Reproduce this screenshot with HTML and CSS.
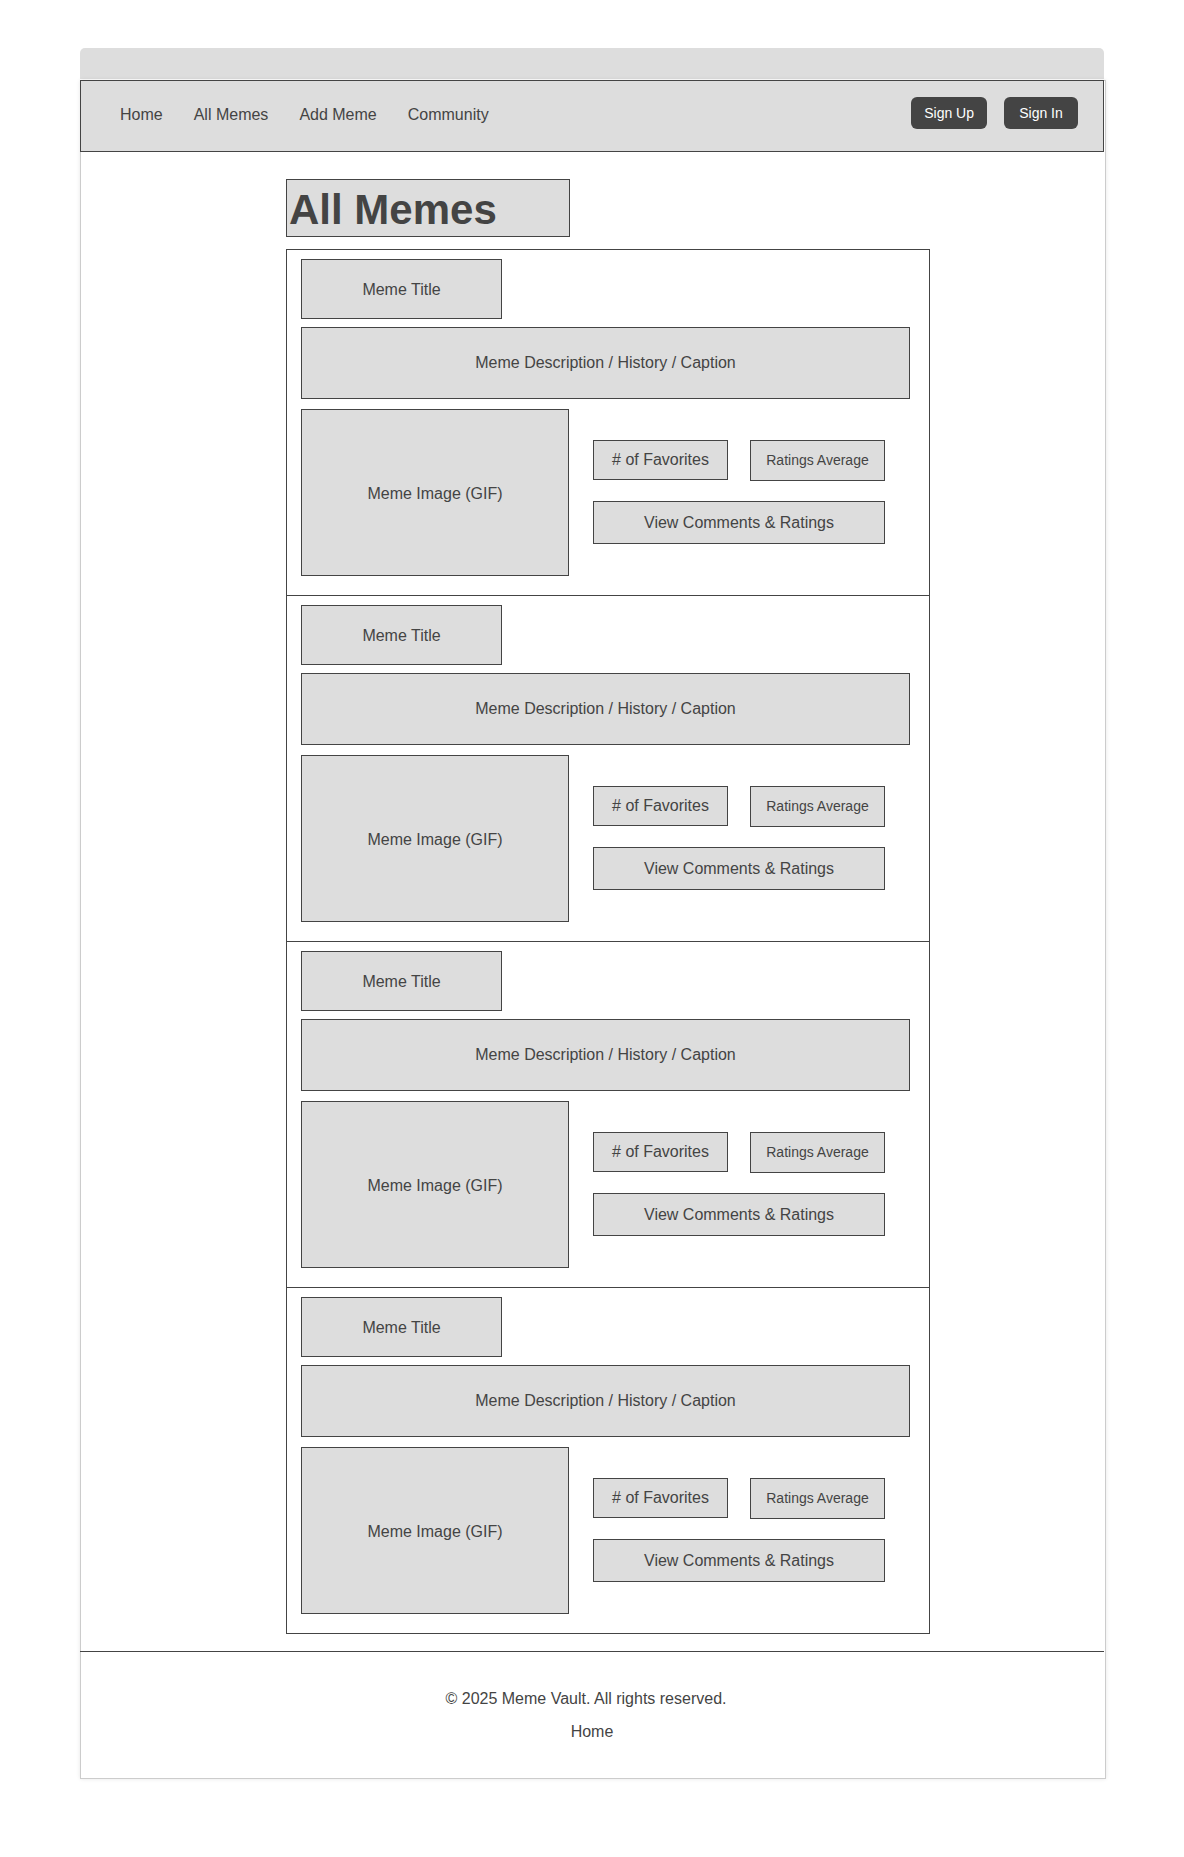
FILE: index.html
```html
<!DOCTYPE html>
<html lang="en">
<head>
<meta charset="utf-8">
<meta name="viewport" content="width=device-width, initial-scale=1">
<title>All Memes</title>
<link rel="stylesheet" href="styles.css">
</head>
<body>
<div class="titlebar"></div>
<div class="frame">
  <header class="header">
    <nav class="nav">
      <a href="#">Home</a>
      <a href="#">All Memes</a>
      <a href="#">Add Meme</a>
      <a href="#">Community</a>
    </nav>
    <div class="account">
      <button type="button" class="button">Sign Up</button>
      <button type="button" class="button">Sign In</button>
    </div>
  </header>
  <main class="main">
    <h1 class="heading">All Memes</h1>
    <div class="list">
      <article class="card">
        <h2 class="box card-title">Meme Title</h2>
        <p class="box card-text">Meme Description / History / Caption</p>
        <div class="card-body">
          <div class="box card-image">Meme Image (GIF)</div>
          <div class="stats">
            <div class="box stat"># of Favorites</div>
            <div class="box stat-small">Ratings Average</div>
            <a href="#" class="box view">View Comments &amp; Ratings</a>
          </div>
        </div>
      </article>
      <article class="card">
        <h2 class="box card-title">Meme Title</h2>
        <p class="box card-text">Meme Description / History / Caption</p>
        <div class="card-body">
          <div class="box card-image">Meme Image (GIF)</div>
          <div class="stats">
            <div class="box stat"># of Favorites</div>
            <div class="box stat-small">Ratings Average</div>
            <a href="#" class="box view">View Comments &amp; Ratings</a>
          </div>
        </div>
      </article>
      <article class="card">
        <h2 class="box card-title">Meme Title</h2>
        <p class="box card-text">Meme Description / History / Caption</p>
        <div class="card-body">
          <div class="box card-image">Meme Image (GIF)</div>
          <div class="stats">
            <div class="box stat"># of Favorites</div>
            <div class="box stat-small">Ratings Average</div>
            <a href="#" class="box view">View Comments &amp; Ratings</a>
          </div>
        </div>
      </article>
      <article class="card">
        <h2 class="box card-title">Meme Title</h2>
        <p class="box card-text">Meme Description / History / Caption</p>
        <div class="card-body">
          <div class="box card-image">Meme Image (GIF)</div>
          <div class="stats">
            <div class="box stat"># of Favorites</div>
            <div class="box stat-small">Ratings Average</div>
            <a href="#" class="box view">View Comments &amp; Ratings</a>
          </div>
        </div>
      </article>
    </div>
  </main>
  <footer class="footer">
    <p class="copyright">© 2025 Meme Vault. All rights reserved.</p>
    <a href="#">Home</a>
  </footer>
</div>
</body>
</html>
```
FILE: styles.css
```css
* {
  box-sizing: border-box;
}

body {
  margin: 0;
  padding: 48px 78px 78px 80px;
  background: #fff;
  color: #444;
  font: 16px/20px "Liberation Sans", Arial, sans-serif;
}

h1, h2, p {
  margin: 0;
}

a {
  color: inherit;
  text-decoration: none;
}

.titlebar {
  height: 31px;
  margin: 0 2px 1px 0;
  background: #ddd;
  border-radius: 5px 5px 0 0;
}

.frame {
  border: 1px solid #ccc;
  box-shadow: 0 0 4px rgba(0, 0, 0, 0.1);
}

.header {
  display: flex;
  justify-content: space-between;
  align-items: flex-start;
  min-height: 72px;
  margin: -1px 1px 0 -1px;
  padding: 16px 25px 16px 39px;
  background: #ddd;
  border: 1px solid #444;
}

.nav {
  display: flex;
  gap: 31px;
  padding-top: 8px;
}

.account {
  display: flex;
  gap: 17px;
}

.button {
  min-width: 74px;
  height: 32px;
  padding: 0 13px;
  border: 0;
  border-radius: 6px;
  background: #444;
  color: #fff;
  font: 14px/20px "Liberation Sans", Arial, sans-serif;
}

.main {
  display: grid;
  grid-template-columns: 41fr minmax(0, 644px) 35fr;
  row-gap: 12px;
  padding: 27px 0 17px;
}

.heading {
  grid-column: 2;
  justify-self: start;
  width: 284px;
  padding: 6px 2px 2px;
  background: #ddd;
  border: 1px solid #444;
  font-size: 42px;
  line-height: 48px;
}

.list {
  grid-column: 2;
  border: 1px solid #444;
  border-top: 0;
}

.card {
  display: flex;
  flex-direction: column;
  padding: 9px 19px 19px 14px;
  border-top: 1px solid #444;
}

.box {
  display: flex;
  align-items: center;
  justify-content: center;
  background: #ddd;
  border: 1px solid #444;
  font-size: 16px;
  font-weight: 400;
}

.card-title {
  width: 201px;
  min-height: 60px;
  margin-bottom: 8px;
  padding-top: 2px;
}

.card-text {
  min-height: 72px;
  margin-bottom: 10px;
}

.card-body {
  display: grid;
  grid-template-columns: 268px 1fr;
  column-gap: 24px;
  padding-right: 25px;
}

.card-image {
  min-height: 167px;
  padding-top: 2px;
}

.stats {
  display: grid;
  grid-template-columns: 1fr 1fr;
  grid-template-rows: 41px 43px;
  gap: 20px 22px;
  padding-top: 31px;
}

.stat {
  margin-bottom: 1px;
}

.stat-small {
  padding-bottom: 2px;
  font-size: 14px;
}

.view {
  grid-column: 1 / -1;
}

.footer {
  display: flex;
  flex-direction: column;
  align-items: center;
  gap: 13px;
  margin: 0 1px 0 -1px;
  padding: 37px 0 36px;
  border-top: 1px solid #444;
}

.copyright {
  padding-right: 12px;
}
```
